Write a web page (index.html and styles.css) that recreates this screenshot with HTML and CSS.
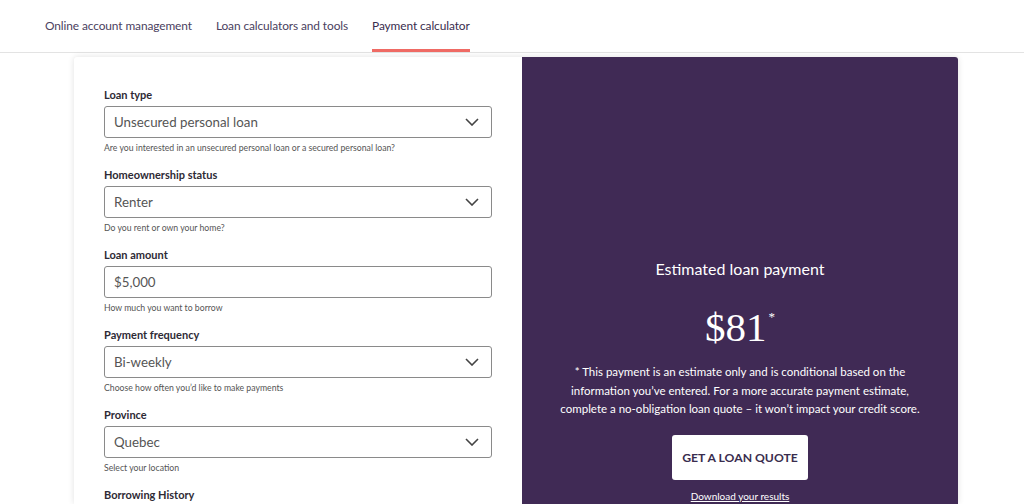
FILE: index.html
```html
<!DOCTYPE html>
<html lang="en">
<head>
<meta charset="utf-8">
<title>Payment calculator</title>
<link rel="stylesheet" href="styles.css">
</head>
<body>
<nav class="tabs">
  <a class="tab" href="#">Online account management</a>
  <a class="tab" href="#">Loan calculators and tools</a>
  <a class="tab active" href="#">Payment calculator</a>
</nav>
<main class="card">
  <form class="form">
    <div class="field">
      <label class="label">Loan type</label>
      <div class="control select"><span>Unsecured personal loan</span><svg class="chev" viewBox="0 0 14 8" width="14" height="8"><path d="M1 1l6 6 6-6" fill="none" stroke="#444" stroke-width="1.6"/></svg></div>
      <p class="help">Are you interested in an unsecured personal loan or a secured personal loan?</p>
    </div>
    <div class="field">
      <label class="label">Homeownership status</label>
      <div class="control select"><span>Renter</span><svg class="chev" viewBox="0 0 14 8" width="14" height="8"><path d="M1 1l6 6 6-6" fill="none" stroke="#444" stroke-width="1.6"/></svg></div>
      <p class="help">Do you rent or own your home?</p>
    </div>
    <div class="field">
      <label class="label">Loan amount</label>
      <div class="control"><span>$5,000</span></div>
      <p class="help">How much you want to borrow</p>
    </div>
    <div class="field">
      <label class="label">Payment frequency</label>
      <div class="control select"><span>Bi-weekly</span><svg class="chev" viewBox="0 0 14 8" width="14" height="8"><path d="M1 1l6 6 6-6" fill="none" stroke="#444" stroke-width="1.6"/></svg></div>
      <p class="help">Choose how often you’d like to make payments</p>
    </div>
    <div class="field">
      <label class="label">Province</label>
      <div class="control select"><span>Quebec</span><svg class="chev" viewBox="0 0 14 8" width="14" height="8"><path d="M1 1l6 6 6-6" fill="none" stroke="#444" stroke-width="1.6"/></svg></div>
      <p class="help">Select your location</p>
    </div>
    <div class="field">
      <label class="label">Borrowing History</label>
    </div>
  </form>
  <section class="result">
    <h2 class="result-title">Estimated loan payment</h2>
    <div class="amount">$81<sup>*</sup></div>
    <p class="disclaimer">* This payment is an estimate only and is conditional based on the information you’ve entered. For a more accurate payment estimate, complete a no-obligation loan quote – it won’t impact your credit score.</p>
    <a class="btn" href="#">GET A LOAN QUOTE</a>
    <a class="download" href="#">Download your results</a>
  </section>
</main>
</body>
</html>
```

FILE: styles.css
```css
* { box-sizing: border-box; }
html, body { margin: 0; padding: 0; background: #fff; }
body {
  font-family: "Lato", "Open Sans", sans-serif;
  color: #333;
  overflow: hidden;
  height: 504px;
}
.tabs {
  display: flex;
  gap: 24px;
  padding-left: 45px;
  height: 53px;
  border-bottom: 1px solid #e3e3e3;
}
.tab {
  display: flex;
  align-items: center;
  padding-top: 1px;
  height: 52px;
  font-size: 11.9px;
  letter-spacing: -0.1px;
  color: #4b4160;
  text-decoration: none;
  border-bottom: 3px solid transparent;
}
.tab.active {
  color: #3a2d4e;
  border-bottom-color: #ef6a64;
}
.card {
  margin: 4px 0 0 74px;
  width: 884px;
  height: 447px;
  display: grid;
  grid-template-columns: 448px 436px;
  background: #fff;
  box-shadow: 0 0 6px rgba(0,0,0,0.12);
  border-radius: 3px 3px 0 0;
}
.form {
  padding: 31px 30px 0 30px;
}
.field {
  display: flex;
  flex-direction: column;
  margin-bottom: 14px;
}
.label {
  font-size: 11px;
  font-weight: 700;
  line-height: 14px;
  color: #2e2a35;
  margin-bottom: 4px;
}
.control {
  height: 32px;
  width: 388px;
  border: 1px solid #8a8a8a;
  border-radius: 3px;
  display: flex;
  align-items: center;
  justify-content: space-between;
  padding: 0 12px 0 9px;
  font-size: 13.3px;
  color: #555;
}
.chev { display: block; }
.help {
  margin: 4px 0 0 0;
  font-size: 8.7px;
  line-height: 12px;
  color: #555;
}
.result {
  background: #402a55;
  border-radius: 0 3px 0 0;
  display: flex;
  flex-direction: column;
  align-items: center;
  padding-top: 201px;
  color: #fff;
  text-align: center;
}
.result-title {
  margin: 0;
  font-size: 16px;
  font-weight: 400;
  line-height: 22px;
}
.amount {
  margin-top: 25px;
  font-family: "Liberation Serif", serif;
  font-size: 41px;
  line-height: 44px;
}
.amount sup {
  font-size: 13px;
  vertical-align: top;
  position: relative;
  top: -10px;
  margin-left: 2px;
}
.disclaimer {
  margin: 14px 0 0 0;
  width: 380px;
  font-size: 11.5px;
  line-height: 18.5px;
}
.btn {
  margin-top: 16px;
  width: 136px;
  height: 45px;
  background: #fff;
  border-radius: 3px;
  display: flex;
  align-items: center;
  justify-content: center;
  color: #3a2d4e;
  font-weight: 700;
  font-size: 12.2px;
  text-decoration: none;
}
.download {
  margin-top: 10px;
  font-size: 10px;
  color: #fff;
  text-decoration: underline;
}
```
